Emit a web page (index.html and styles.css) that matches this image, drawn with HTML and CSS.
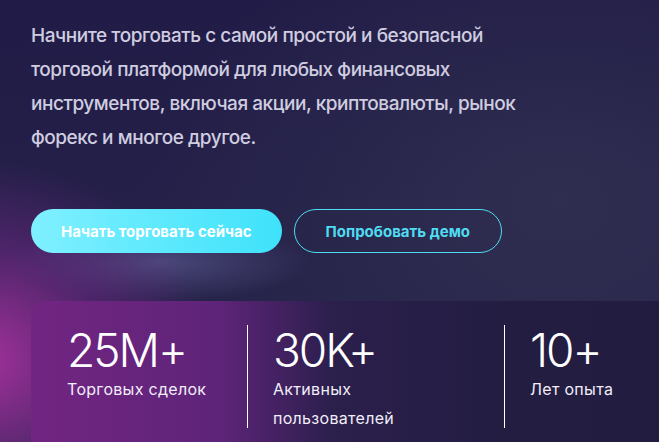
FILE: index.html
```html
<!DOCTYPE html>
<html lang="ru">
<head>
  <meta charset="UTF-8">
  <meta name="viewport" content="width=device-width, initial-scale=1.0">
  <title>Торговая платформа</title>
  <link rel="stylesheet" href="styles.css">
</head>
<body>
  <section class="hero">
    <p class="hero-text">Начните торговать с самой простой и безопасной торговой платформой для любых финансовых инструментов, включая акции, криптовалюты, рынок форекс и многое другое.</p>
    <div class="hero-actions">
      <a class="btn btn-primary" href="#">Начать торговать сейчас</a>
      <a class="btn btn-outline" href="#">Попробовать демо</a>
    </div>
    <div class="stats">
      <div class="stat stat-first">
        <div class="stat-value">25M+</div>
        <div class="stat-label">Торговых сделок</div>
      </div>
      <div class="stat">
        <div class="stat-value">30K+</div>
        <div class="stat-label">Активных<br>пользователей</div>
      </div>
      <div class="stat">
        <div class="stat-value">10+</div>
        <div class="stat-label">Лет опыта</div>
      </div>
    </div>
  </section>
</body>
</html>
```

FILE: styles.css
```css
html, body {
  margin: 0;
  padding: 0;
  height: 100%;
  overflow: hidden;
}
body {
  font-family: Inter, "Noto Sans", sans-serif;
  color: #d0cde0;
  background-color: #231e45;
  background-image:
    radial-gradient(ellipse 230px 200px at -20px 360px, rgba(170, 50, 160, 0.95), rgba(120, 40, 140, 0.5) 55%, rgba(35, 30, 70, 0) 100%),
    radial-gradient(ellipse 150px 40px at 160px 262px, rgba(110, 110, 170, 0.5), rgba(35, 30, 70, 0) 100%),
    radial-gradient(ellipse 420px 300px at 560px 200px, rgba(55, 55, 85, 0.6), rgba(35, 30, 70, 0) 100%),
    linear-gradient(180deg, #211c47 0%, #27244a 100%);
}
.hero {
  padding: 19px 0 0 31px;
}
.hero-text {
  margin: 0;
  width: 500px;
  font-size: 19px;
  line-height: 34px;
  font-weight: 500;
  letter-spacing: -0.45px;
}
.hero-actions {
  display: flex;
  gap: 12px;
  margin-top: 54px;
}
.btn {
  display: flex;
  align-items: center;
  height: 44px;
  padding: 0 30px;
  box-sizing: border-box;
  border-radius: 22px;
  font-size: 15px;
  font-weight: 700;
  text-decoration: none;
}
.btn-primary {
  color: #ffffff;
  background: linear-gradient(90deg, #7ff0ff 0%, #3fe2fb 100%);
}
.btn-outline {
  color: #4fdcf2;
  border: 1px solid #4fdcf2;
  padding: 0 31px;
}
.stats {
  display: grid;
  grid-template-columns: 180px 257px 1fr;
  margin-top: 48px;
  padding: 24px 0 14px 36px;
  border-radius: 16px 0 0 0;
  background: linear-gradient(90deg, #722582 0%, #5e2479 30%, #2b1f4c 48%, #231d42 75%, #221d40 100%);
  color: #ffffff;
}
.stat {
  border-left: 1px solid #ffffff;
  padding-left: 25px;
  height: 103px;
}
.stat-first {
  border-left: none;
  padding-left: 0;
}
.stat-value {
  font-size: 46px;
  line-height: 50px;
  font-weight: 300;
  letter-spacing: -2px;
}
.stat-label {
  font-size: 16px;
  line-height: 29px;
  letter-spacing: 0.3px;
  color: #f1eef8;
}
```
